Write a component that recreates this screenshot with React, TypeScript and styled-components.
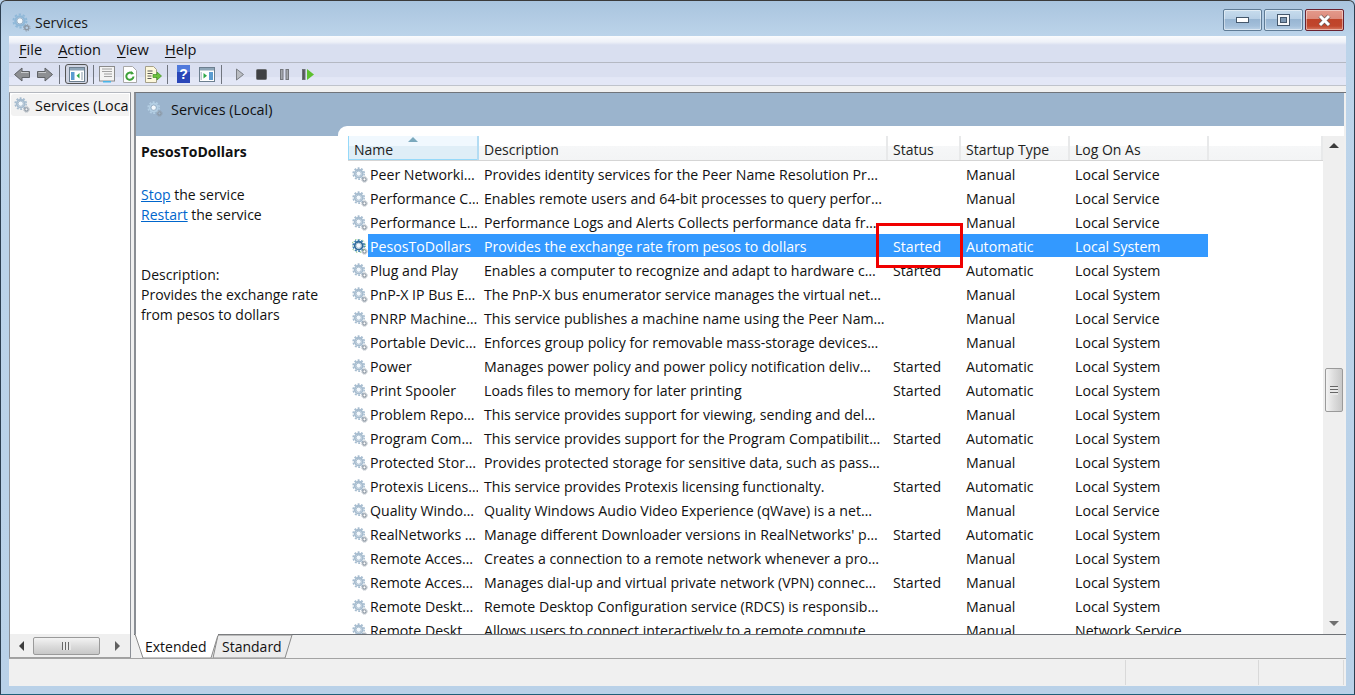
import React from "react";
import styled, { createGlobalStyle } from "styled-components";

const GlobalStyle = createGlobalStyle`
  html, body {
    margin: 0;
    padding: 0;
    width: 1355px;
    height: 695px;
    overflow: hidden;
    background: #b9d1e8;
  }
  * { box-sizing: border-box; }
`;

const Window = styled.div`
  position: relative;
  width: 1355px;
  height: 695px;
  display: flex;
  flex-direction: column;
  border: 1px solid #2c3e50;
  border-top-color: #3a3a3a;
  border-bottom-color: #1f5f78;
  border-radius: 6px 6px 0 0;
  padding: 0 8px 8px 8px;
  background: linear-gradient(180deg, #a9c4de 0, #bcd4ea 36px, #b9d1e8 100%);
  font-family: "Open Sans", "Noto Sans", sans-serif;
  font-size: 14px;
  color: #111;
`;

const TitleBar = styled.div`
  height: 35px;
  flex: none;
  display: flex;
  align-items: center;
  padding: 7px 0 0 3px;
  gap: 4px;
  font-size: 14px;
  color: #1a1a1a;
`;

const Caption = styled.div`
  margin-left: auto;
  margin-top: -4px;
  margin-right: 2px;
  display: flex;
  gap: 2px;
`;

const CaptionButton = styled.div<{ $close?: boolean }>`
  width: 39px;
  height: 22px;
  border: 1px solid ${(p) => (p.$close ? "#6a2230" : "#5f7b95")};
  border-radius: 2px;
  display: flex;
  align-items: center;
  justify-content: center;
  background: ${(p) =>
    p.$close
      ? "linear-gradient(180deg, #e49a8c 0, #dc8a7b 45%, #bf4329 46%, #c0462c 80%, #d87a62 100%)"
      : "linear-gradient(180deg, #c7dced 0, #b7cfe5 45%, #97b5d2 46%, #a3bfda 80%, #bdd3e7 100%)"};
  box-shadow: inset 0 0 0 1px rgba(255, 255, 255, 0.45);
`;

const Client = styled.div`
  flex: 1;
  min-height: 0;
  display: flex;
  flex-direction: column;
  background: #f0f0f0;
`;

const MenuBar = styled.div`
  height: 27px;
  flex: none;
  display: flex;
  align-items: center;
  gap: 16px;
  padding: 0 0 1px 10px;
  background: linear-gradient(180deg, #fafbfd 0, #eef1f8 6px, #d9dff0 9px, #d9dff0 100%);
  border-bottom: 1px solid #b4b8c2;
`;

const MenuItem = styled.span`
  font-size: 14.6px;
  color: #111;
  u { text-decoration-thickness: 1px; text-underline-offset: 2px; }
`;

const ToolBar = styled.div`
  height: 23px;
  flex: none;
  display: flex;
  align-items: center;
  padding-left: 1px;
  background: linear-gradient(180deg, #dadff0 0, #dadff0 65%, #e3e7f6 66%, #e3e7f6 100%);
  border-bottom: 1px solid #bfc3cb;
`;

const ToolSlot = styled.div<{ $w: number; $pressed?: boolean }>`
  width: ${(p) => p.$w}px;
  height: ${(p) => (p.$pressed ? "20px" : "22px")};
  display: flex;
  align-items: center;
  justify-content: center;
  flex: none;
  border: ${(p) => (p.$pressed ? "1px solid #555" : "none")};
  border-radius: ${(p) => (p.$pressed ? "3px" : "0")};
  background: ${(p) => (p.$pressed ? "#cfd4e2" : "transparent")};
`;

const ToolSep = styled.div<{ $l: number; $r: number }>`
  width: 1px;
  height: 19px;
  background: #70757f;
  flex: none;
  margin: 0 ${(p) => p.$r}px 0 ${(p) => p.$l}px;
`;

const Panes = styled.div`
  flex: 1;
  min-height: 0;
  display: flex;
  padding-top: 6px;
  gap: 3px;
  background: #f0f0f0;
`;

const TreePane = styled.div`
  width: 122px;
  flex: none;
  display: flex;
  flex-direction: column;
  background: #fff;
  border: 1px solid #8b8f96;
  border-bottom: 1px solid #a0a0a0;
  border-top-color: #b4b8bf;
`;

const TreeBody = styled.div`
  flex: 1;
  padding: 1px 1px;
`;

const TreeItem = styled.div`
  height: 22px;
  display: flex;
  align-items: center;
  gap: 5px;
  padding-left: 3px;
  background: #f2f2f2;
  border-radius: 3px 0 0 3px;
  overflow: hidden;
  white-space: nowrap;
  font-size: 14.4px;
`;

const HScroll = styled.div`
  height: 23px;
  flex: none;
  display: flex;
  align-items: center;
  background: #efefef;
`;

const HArrow = styled.div<{ $w: number; $shift?: number }>`
  width: ${(p) => p.$w}px;
  padding-left: ${(p) => p.$shift ?? 0}px;
  flex: none;
  display: flex;
  justify-content: center;
`;

const HThumb = styled.div`
  width: 67px;
  height: 18px;
  flex: none;
  margin-left: 1px;
  border: 1px solid #9a9a9a;
  border-radius: 2px;
  background: linear-gradient(180deg, #f3f3f3 0, #dcdcdc 50%, #c8c8c8 100%);
  display: flex;
  align-items: center;
  justify-content: center;
`;

const ThumbGrip = styled.div<{ $vertical?: boolean }>`
  width: ${(p) => (p.$vertical ? "8px" : "9px")};
  height: ${(p) => (p.$vertical ? "9px" : "8px")};
  background: ${(p) =>
    p.$vertical
      ? "repeating-linear-gradient(180deg, #666 0 1px, #e8e8e8 1px 3px)"
      : "repeating-linear-gradient(90deg, #666 0 1px, #e8e8e8 1px 3px)"};
`;

const ArrowShape = styled.div<{ $dir: "left" | "right" | "up" | "down" }>`
  width: 0;
  height: 0;
  ${(p) =>
    p.$dir === "left"
      ? "border-top: 5px solid transparent; border-bottom: 5px solid transparent; border-right: 5px solid #3c3c3c;"
      : p.$dir === "right"
      ? "border-top: 5px solid transparent; border-bottom: 5px solid transparent; border-left: 5px solid #606060;"
      : p.$dir === "up"
      ? "border-left: 5px solid transparent; border-right: 5px solid transparent; border-bottom: 5px solid #3c3c3c;"
      : "border-left: 5px solid transparent; border-right: 5px solid transparent; border-top: 5px solid #707070;"}
`;

const MainPane = styled.div`
  flex: 1;
  min-width: 0;
  display: flex;
  flex-direction: column;
  border-left: 2px solid #8a8e94;
  border-top: 1px solid #70747a;
`;

const PaneHeader = styled.div`
  height: 33px;
  flex: none;
  display: flex;
  align-items: center;
  gap: 8px;
  padding: 0 0 1px 11px;
  margin-right: 2px;
  background: #9bb4cd;
  font-size: 14.4px;
  color: #111;
`;

const PaneBody = styled.div`
  flex: 1;
  min-height: 0;
  display: flex;
  background: #fff;
  margin-right: 2px;
`;

const InfoColumn = styled.div`
  width: 202px;
  flex: none;
  display: flex;
  flex-direction: column;
`;

const InfoStrip = styled.div`
  height: 10px;
  background: #9bb4cd;
  flex: none;
`;

const InfoText = styled.div`
  padding: 6px 6px 0 5px;
  line-height: 20px;
  font-size: 14px;
`;

const ServiceName = styled.div`
  font-weight: 700;
  font-size: 14px;
  margin-bottom: 23px;
`;

const ActionLink = styled.a`
  color: #0066cc;
  text-decoration: underline;
`;

const DescriptionBlock = styled.div`
  margin-top: 40px;
`;

const ListArea = styled.div`
  flex: 1;
  min-width: 0;
  background: #9bb4cd;
  display: flex;
`;

const ListInner = styled.div`
  flex: 1;
  min-width: 0;
  background: #fff;
  border-top-left-radius: 9px;
  padding: 10px 0 0 10px;
  display: flex;
`;

const Table = styled.div`
  flex: 1;
  min-width: 0;
  overflow: hidden;
  display: flex;
  flex-direction: column;
`;

const TableHead = styled.div`
  height: 25px;
  flex: none;
  display: grid;
  grid-template-columns: 131px 409px 73px 109px 139px 1fr;
  background: linear-gradient(180deg, #fff 0, #fff 40%, #f6f7f8 41%, #f3f4f5 100%);
  border-bottom: 1px solid #d5d5d5;
`;

const HeadCell = styled.div<{ $sorted?: boolean }>`
  position: relative;
  display: flex;
  align-items: flex-end;
  padding: 0 0 1px ${(p) => (p.$sorted ? "6px" : "5px")};
  font-size: 14px;
  color: #222;
  border-right: 2px solid ${(p) => (p.$sorted ? "#b3dcf3" : "#e8e9ea")};
  ${(p) =>
    p.$sorted
      ? `background: linear-gradient(180deg, #f0f8fe 0, #f0f8fe 40%, #dfeef7 41%, #dfeef7 100%);
         box-shadow: inset 1px 0 0 #96d9f9, inset 0 -1px 0 #96d9f9;`
      : ""}
`;

const SortMark = styled.div`
  position: absolute;
  top: 1px;
  left: 60px;
  width: 0;
  height: 0;
  border-left: 5px solid transparent;
  border-right: 5px solid transparent;
  border-bottom: 5px solid #7ba9bd;
`;

const Rows = styled.div`
  flex: 1;
  min-height: 0;
  overflow: hidden;
  padding-top: 1px;
`;

const Row = styled.div`
  height: 24px;
  display: grid;
  grid-template-columns: 130px 409px 73px 109px 139px;
  align-items: start;
  white-space: nowrap;
  font-size: 14.15px;
  color: #111;
`;

const NameCell = styled.div`
  display: flex;
  align-items: flex-start;
  padding-left: 4px;
`;

const GearSlot = styled.div`
  height: 23px;
  padding-top: 5px;
  flex: none;
`;

const Cell = styled.div<{ $selected?: boolean }>`
  height: 23px;
  line-height: 26px;
  padding-left: 6px;
  overflow: hidden;
  color: ${(p) => (p.$selected ? "#fff" : "#111")};
  background: ${(p) => (p.$selected ? "#3399ff" : "transparent")};
`;

const NameText = styled(Cell)`
  padding-left: 2px;
  flex: 1;
  min-width: 0;
`;

const VScroll = styled.div`
  width: 21px;
  flex: none;
  display: flex;
  flex-direction: column;
  align-items: center;
  background: #efefef;
  padding-top: 7px;
`;

const VThumb = styled.div`
  width: 18px;
  height: 44px;
  margin-top: 220px;
  border: 1px solid #9a9a9a;
  border-radius: 2px;
  background: linear-gradient(90deg, #f3f3f3 0, #dcdcdc 50%, #c8c8c8 100%);
  display: flex;
  align-items: center;
  justify-content: center;
`;

const VDown = styled.div`
  margin-top: auto;
  margin-bottom: 8px;
`;

const TabBar = styled.div`
  height: 24px;
  flex: none;
  display: flex;
  align-items: flex-start;
  background: #f0f0f0;
  margin-left: -2px;
  border-top: 1px solid #6e7277;
  padding-left: 1px;
`;

const TabSvg = styled.svg`
  flex: none;
  display: block;
  margin-top: -1px;
`;

const TabLabel = styled.text`
  font-size: 14px;
  fill: #111;
  font-family: "Open Sans", "Noto Sans", sans-serif;
`;

const StatusBar = styled.div`
  height: 28px;
  flex: none;
  display: grid;
  grid-template-columns: 1117px 133px 85px;
  background: #f0f0f0;
  border-top: 1px solid #a3a3a3;
`;

const StatusCell = styled.div`
  margin: 1px 0;
  border-right: 1px solid #d9d9d9;
`;

const Highlight = styled.div`
  position: absolute;
  left: 875px;
  top: 222px;
  width: 87px;
  height: 45px;
  border: 3px solid #f00000;
  pointer-events: none;
`;

const GearSvg = styled.svg`
  flex: none;
  display: block;
`;

const Gear = ({ size = 16, active = false, tint = "#a6bccf" }: { size?: number; active?: boolean; tint?: string }) => (
  <GearSvg width={size} height={size} viewBox="0 0 18 18">
    <g fill="none">
      <circle cx="7.5" cy="7.5" r="6.2" stroke={active ? "#3f7fb4" : tint} strokeWidth="1.8" strokeDasharray="2.2 1.7" />
      <circle cx="7.5" cy="7.5" r="4.4" stroke={active ? "#2f6b9a" : tint} strokeWidth="2" />
      <circle cx="7.5" cy="7.5" r="2.9" fill="#f4f9fd" stroke="#7f9cb6" strokeWidth="0.7" />
      <circle cx="14" cy="14" r="1.9" stroke="#8c97a3" strokeWidth="1.3" />
      <circle cx="14" cy="14" r="3.1" stroke="#8c97a3" strokeWidth="0.9" strokeDasharray="1.2 1.2" />
    </g>
    {active && <circle cx="7.5" cy="7.5" r="7.6" fill="none" stroke="#4caf3c" strokeWidth="0.9" strokeDasharray="1.5 3" />}
  </GearSvg>
);

const NavArrow = ({ right }: { right?: boolean }) => (
  <svg width="16" height="15" viewBox="0 0 16 15">
    <path
      d={right ? "M.5 4.5h7.5V1l7.5 6.5L8 14v-3.5H.5z" : "M15.5 4.5H8V1L.5 7.5 8 14v-3.5h7.5z"}
      fill="#8d8f92"
      stroke="#5f6266"
      strokeWidth="1"
    />
    <path d={right ? "M1.5 5.5H9" : "M14.5 5.5H7"} stroke="#c8cacc" strokeWidth="1" />
  </svg>
);

const ConsoleTree = () => (
  <svg width="16" height="15" viewBox="0 0 16 15">
    <rect x="0.5" y="0.5" width="15" height="14" fill="#fff" stroke="#6d7f8f" />
    <rect x="1" y="1" width="14" height="2.5" fill="#8fa6b8" />
    <rect x="2" y="5" width="3.5" height="8" fill="#5a9bd0" />
    <path d="M10.5 6v5.5L7.5 8.7z" fill="#2fa84a" />
    <rect x="12" y="5" width="2" height="8" fill="#c3ccd4" />
  </svg>
);

const ActionPane = () => (
  <svg width="16" height="15" viewBox="0 0 16 15">
    <rect x="0.5" y="0.5" width="15" height="14" fill="#fff" stroke="#6d7f8f" />
    <rect x="1" y="1" width="14" height="2.5" fill="#8fa6b8" />
    <path d="M4.5 6v5.5L8 8.7z" fill="#2fa84a" />
    <rect x="1.5" y="5" width="1.5" height="8" fill="#c3ccd4" />
    <rect x="10" y="5" width="4" height="8" fill="#5a9bd0" />
  </svg>
);

const PropertiesIcon = () => (
  <svg width="16" height="17" viewBox="0 0 16 17">
    <rect x="0.5" y="0.5" width="15" height="14.5" fill="#f3f3f3" stroke="#8a8a8a" />
    <path d="M3 3h10M3 5.5h10M5 8h8M5 10.5h8" stroke="#a0a0a0" />
    <rect x="4" y="15" width="8" height="1.5" fill="#49b4e6" />
  </svg>
);

const RefreshIcon = () => (
  <svg width="14" height="17" viewBox="0 0 14 17">
    <path d="M.5.5h9l4 4v12H.5z" fill="#fff" stroke="#a8a8a8" />
    <path d="M10.5 10.5a3.6 3.6 0 1 1-1.2-3" fill="none" stroke="#3ea13a" strokeWidth="2" />
    <path d="M8.5 5l2.5 3-3.4.6z" fill="#3ea13a" />
  </svg>
);

const ExportIcon = () => (
  <svg width="17" height="17" viewBox="0 0 17 17">
    <path d="M.5.5h8l3 3v13H.5z" fill="#fdf8dc" stroke="#a5a08a" />
    <path d="M2.5 5h5M2.5 7.5h5M2.5 10h4M2.5 12.5h4" stroke="#5a5a5a" />
    <path d="M8 8.5h4V6l4.5 4-4.5 4v-2.5H8z" fill="#6cc23c" stroke="#3f8f22" strokeWidth="0.7" />
  </svg>
);

const HelpIcon = () => (
  <svg width="13" height="18" viewBox="0 0 13 18">
    <rect width="13" height="18" fill="#2a46b8" />
    <rect width="13" height="7" fill="#4f79dc" />
    <text x="6.5" y="14" textAnchor="middle" fontSize="14" fontWeight="700" fill="#fff" fontFamily="Liberation Sans, sans-serif">
      ?
    </text>
  </svg>
);

const PlayIcon = () => (
  <svg width="8" height="13" viewBox="0 0 8 13">
    <path d="M.5 1l7 5.5-7 5.5z" fill="#b9bcc2" stroke="#7b7e84" />
  </svg>
);

const StopIcon = () => (
  <svg width="11" height="11" viewBox="0 0 11 11">
    <rect x="0.5" y="0.5" width="10" height="10" rx="1" fill="#3f4144" stroke="#6a6c70" />
  </svg>
);

const PauseIcon = () => (
  <svg width="9" height="11" viewBox="0 0 9 11">
    <rect x="0.5" y="0.5" width="2.5" height="10" fill="#a3a6ab" stroke="#74777c" />
    <rect x="6" y="0.5" width="2.5" height="10" fill="#a3a6ab" stroke="#74777c" />
  </svg>
);

const ResumeIcon = () => (
  <svg width="12" height="11" viewBox="0 0 12 11">
    <rect x="0.5" y="0.5" width="2.5" height="10" fill="#55585c" stroke="#6d7074" />
    <path d="M5 0l7 5.5L5 11z" fill="#5cc02e" />
  </svg>
);

type Service = {
  name: string;
  desc: string;
  status: string;
  startup: string;
  logon: string;
  selected?: boolean;
};

const services: Service[] = [
  { name: "Peer Networki…", desc: "Provides identity services for the Peer Name Resolution Pr…", status: "", startup: "Manual", logon: "Local Service" },
  { name: "Performance C…", desc: "Enables remote users and 64-bit processes to query perfor…", status: "", startup: "Manual", logon: "Local Service" },
  { name: "Performance L…", desc: "Performance Logs and Alerts Collects performance data fr…", status: "", startup: "Manual", logon: "Local Service" },
  { name: "PesosToDollars", desc: "Provides the exchange rate from pesos to dollars", status: "Started", startup: "Automatic", logon: "Local System", selected: true },
  { name: "Plug and Play", desc: "Enables a computer to recognize and adapt to hardware c…", status: "Started", startup: "Automatic", logon: "Local System" },
  { name: "PnP-X IP Bus E…", desc: "The PnP-X bus enumerator service manages the virtual net…", status: "", startup: "Manual", logon: "Local System" },
  { name: "PNRP Machine…", desc: "This service publishes a machine name using the Peer Nam…", status: "", startup: "Manual", logon: "Local Service" },
  { name: "Portable Devic…", desc: "Enforces group policy for removable mass-storage devices…", status: "", startup: "Manual", logon: "Local System" },
  { name: "Power", desc: "Manages power policy and power policy notification deliv…", status: "Started", startup: "Automatic", logon: "Local System" },
  { name: "Print Spooler", desc: "Loads files to memory for later printing", status: "Started", startup: "Automatic", logon: "Local System" },
  { name: "Problem Repo…", desc: "This service provides support for viewing, sending and del…", status: "", startup: "Manual", logon: "Local System" },
  { name: "Program Com…", desc: "This service provides support for the Program Compatibilit…", status: "Started", startup: "Automatic", logon: "Local System" },
  { name: "Protected Stor…", desc: "Provides protected storage for sensitive data, such as pass…", status: "", startup: "Manual", logon: "Local System" },
  { name: "Protexis Licens…", desc: "This service provides Protexis licensing functionalty.", status: "Started", startup: "Automatic", logon: "Local System" },
  { name: "Quality Windo…", desc: "Quality Windows Audio Video Experience (qWave) is a net…", status: "", startup: "Manual", logon: "Local Service" },
  { name: "RealNetworks …", desc: "Manage different Downloader versions in RealNetworks' p…", status: "Started", startup: "Automatic", logon: "Local System" },
  { name: "Remote Acces…", desc: "Creates a connection to a remote network whenever a pro…", status: "", startup: "Manual", logon: "Local System" },
  { name: "Remote Acces…", desc: "Manages dial-up and virtual private network (VPN) connec…", status: "Started", startup: "Manual", logon: "Local System" },
  { name: "Remote Deskt…", desc: "Remote Desktop Configuration service (RDCS) is responsib…", status: "", startup: "Manual", logon: "Local System" },
  { name: "Remote Deskt…", desc: "Allows users to connect interactively to a remote compute…", status: "", startup: "Manual", logon: "Network Service" },
];

const headers = ["Name", "Description", "Status", "Startup Type", "Log On As", ""];

export default function App() {
  return (
    <Window>
      <GlobalStyle />
      <TitleBar>
        <Gear size={19} tint="#8fb8d8" />
        Services
        <Caption>
          <CaptionButton>
            <svg width="13" height="6" viewBox="0 0 13 6">
              <rect x="0.5" y="0.5" width="12" height="5" fill="#fff" stroke="#44576b" />
            </svg>
          </CaptionButton>
          <CaptionButton>
            <svg width="13" height="12" viewBox="0 0 13 12">
              <rect x="0.5" y="0.5" width="12" height="11" fill="#f4f6f8" stroke="#44576b" />
              <rect x="3.5" y="3.5" width="6" height="5" fill="#7d97b2" stroke="#44576b" />
            </svg>
          </CaptionButton>
          <CaptionButton $close>
            <svg width="15" height="13" viewBox="0 0 15 13">
              <path d="M3 2l9 9M12 2l-9 9" stroke="#6b5a58" strokeWidth="4.4" />
              <path d="M3 2l9 9M12 2l-9 9" stroke="#fff" strokeWidth="3" />
            </svg>
          </CaptionButton>
        </Caption>
      </TitleBar>
      <Client>
        <MenuBar>
          <MenuItem><u>F</u>ile</MenuItem>
          <MenuItem><u>A</u>ction</MenuItem>
          <MenuItem><u>V</u>iew</MenuItem>
          <MenuItem><u>H</u>elp</MenuItem>
        </MenuBar>
        <ToolBar>
          <ToolSlot $w={24}><NavArrow /></ToolSlot>
          <ToolSlot $w={22}><NavArrow right /></ToolSlot>
          <ToolSep $l={3} $r={5} />
          <ToolSlot $w={23} $pressed><ConsoleTree /></ToolSlot>
          <ToolSep $l={5} $r={1} />
          <ToolSlot $w={23}><PropertiesIcon /></ToolSlot>
          <ToolSlot $w={24}><RefreshIcon /></ToolSlot>
          <ToolSlot $w={22}><ExportIcon /></ToolSlot>
          <ToolSep $l={3} $r={4} />
          <ToolSlot $w={23}><HelpIcon /></ToolSlot>
          <ToolSlot $w={24}><ActionPane /></ToolSlot>
          <ToolSep $l={2} $r={6} />
          <ToolSlot $w={23}><PlayIcon /></ToolSlot>
          <ToolSlot $w={20}><StopIcon /></ToolSlot>
          <ToolSlot $w={26}><PauseIcon /></ToolSlot>
          <ToolSlot $w={22}><ResumeIcon /></ToolSlot>
        </ToolBar>
        <Panes>
          <TreePane>
            <TreeBody>
              <TreeItem>
                <Gear />
                Services (Local)
              </TreeItem>
            </TreeBody>
            <HScroll>
              <HArrow $w={22}><ArrowShape $dir="left" /></HArrow>
              <HThumb><ThumbGrip /></HThumb>
              <HArrow $w={30} $shift={4}><ArrowShape $dir="right" /></HArrow>
            </HScroll>
          </TreePane>
          <MainPane>
            <PaneHeader>
              <Gear tint="#b4cfe4" />
              Services (Local)
            </PaneHeader>
            <PaneBody>
              <InfoColumn>
                <InfoStrip />
                <InfoText>
                  <ServiceName>PesosToDollars</ServiceName>
                  <div><ActionLink>Stop</ActionLink> the service</div>
                  <div><ActionLink>Restart</ActionLink> the service</div>
                  <DescriptionBlock>
                    Description:
                    <br />
                    Provides the exchange rate
                    <br />
                    from pesos to dollars
                  </DescriptionBlock>
                </InfoText>
              </InfoColumn>
              <ListArea>
                <ListInner>
                  <Table>
                    <TableHead>
                      {headers.map((h, i) => (
                        <HeadCell key={i} $sorted={i === 0}>
                          {i === 0 && <SortMark />}
                          {h}
                        </HeadCell>
                      ))}
                    </TableHead>
                    <Rows>
                      {services.map((s, i) => (
                        <Row key={i}>
                          <NameCell>
                            <GearSlot><Gear active={s.selected} /></GearSlot>
                            <NameText $selected={s.selected}>{s.name}</NameText>
                          </NameCell>
                          <Cell $selected={s.selected}>{s.desc}</Cell>
                          <Cell $selected={s.selected}>{s.status}</Cell>
                          <Cell $selected={s.selected}>{s.startup}</Cell>
                          <Cell $selected={s.selected}>{s.logon}</Cell>
                        </Row>
                      ))}
                    </Rows>
                  </Table>
                  <VScroll>
                    <ArrowShape $dir="up" />
                    <VThumb><ThumbGrip $vertical /></VThumb>
                    <VDown><ArrowShape $dir="down" /></VDown>
                  </VScroll>
                </ListInner>
              </ListArea>
            </PaneBody>
            <TabBar>
              <TabSvg width="165" height="24" viewBox="0 0 165 24">
                <path d="M83 1H157L150 24H78z" fill="#ececec" stroke="#8a8a8a" />
                <path d="M0 0L8 24H76L83 1" fill="#fff" stroke="#8a8a8a" />
                <path d="M1 0.5H83" stroke="#fff" strokeWidth="2" />
                <TabLabel x="10" y="18">Extended</TabLabel>
                <TabLabel x="87" y="18">Standard</TabLabel>
              </TabSvg>
            </TabBar>
          </MainPane>
        </Panes>
        <StatusBar>
          <StatusCell />
          <StatusCell />
          <StatusCell />
        </StatusBar>
      </Client>
      <Highlight />
    </Window>
  );
}
